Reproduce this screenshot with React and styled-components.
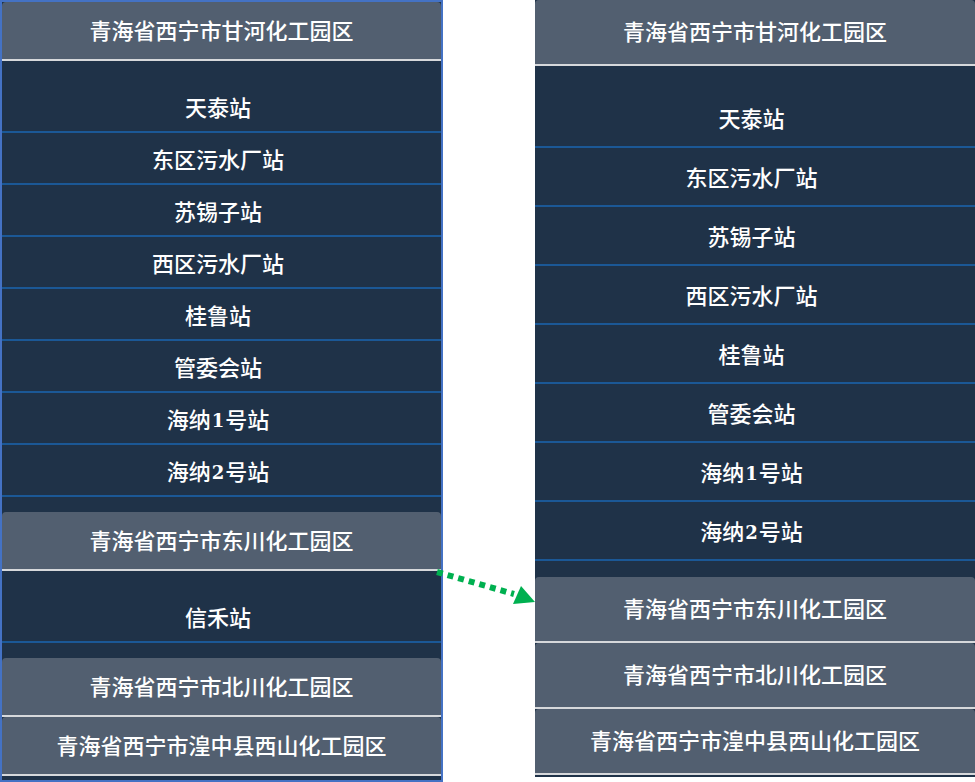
import React from "react";
import styled, { createGlobalStyle } from "styled-components";

const GlobalStyle = createGlobalStyle`
  html, body {
    margin: 0;
    padding: 0;
    background: #ffffff;
  }
  body {
    font-family: "Noto Sans CJK SC", "Noto Sans", sans-serif;
  }
`;

const Page = styled.div`
  position: relative;
  width: 975px;
  height: 782px;
  display: flex;
  align-items: flex-start;
  gap: 92px;
  overflow: hidden;
`;

const Panel = styled.div`
  box-sizing: border-box;
  width: ${(p) => p.$width}px;
  height: ${(p) => p.$height}px;
  background: #1f3248;
  border: ${(p) => (p.$framed ? "2px solid #4472c4" : "none")};
  display: flex;
  flex-direction: column;
  overflow: hidden;
  flex-shrink: 0;
`;

const GroupHeader = styled.div`
  box-sizing: border-box;
  height: ${(p) => p.$h + 2}px;
  padding-bottom: 4px;
  display: flex;
  align-items: center;
  justify-content: center;
  background: #525f70;
  border-bottom: 2px solid #d6d8db;
  border-radius: 4px 4px 0 0;
  color: #ffffff;
  font-size: 22px;
  line-height: 1;
  font-weight: 500;
  flex-shrink: 0;
`;

const StationList = styled.ul`
  list-style: none;
  margin: 0;
  padding: ${(p) => p.$top}px 0 ${(p) => p.$bottom}px;
`;

const Station = styled.li`
  box-sizing: border-box;
  height: ${(p) => p.$h}px;
  padding: 0 7px 1px 0;
  display: flex;
  align-items: center;
  justify-content: center;
  border-bottom: 2px solid #1b5896;
  color: #ffffff;
  font-size: 22px;
  line-height: 1;
  font-weight: 500;
`;

const Digit = styled.span`
  font-family: "DejaVu Serif", "Liberation Serif", serif;
  font-weight: 700;
  font-size: 18px;
  position: relative;
  top: 3px;
  margin: 0 1px;
`;

const Arrow = styled.svg`
  position: absolute;
  left: 430px;
  top: 560px;
  overflow: visible;
`;

const groups = [
  {
    name: "青海省西宁市甘河化工园区",
    stations: [
      "天泰站",
      "东区污水厂站",
      "苏锡子站",
      "西区污水厂站",
      "桂鲁站",
      "管委会站",
      "海纳1号站",
      "海纳2号站",
    ],
  },
  { name: "青海省西宁市东川化工园区", stations: ["信禾站"] },
  { name: "青海省西宁市北川化工园区", stations: [] },
  { name: "青海省西宁市湟中县西山化工园区", stations: [] },
];

const renderName = (text) =>
  text.split(/(\d)/).map((part, i) =>
    /\d/.test(part) ? <Digit key={i}>{part}</Digit> : part
  );

function StationPanel({ sizes, openGroups, framed, width, height }) {
  return (
    <Panel $framed={framed} $width={width} $height={height}>
      {groups.map((g, gi) => (
        <React.Fragment key={g.name}>
          <GroupHeader $h={sizes.header}>{g.name}</GroupHeader>
          {openGroups.includes(gi) && g.stations.length > 0 && (
            <StationList $top={sizes.padTop} $bottom={sizes.padBottom}>
              {g.stations.map((s) => (
                <Station key={s} $h={sizes.row}>
                  {renderName(s)}
                </Station>
              ))}
            </StationList>
          )}
        </React.Fragment>
      ))}
    </Panel>
  );
}

export default function App() {
  return (
    <>
      <GlobalStyle />
      <Page>
        <StationPanel
          framed
          width={443}
          height={782}
          openGroups={[0, 1]}
          sizes={{ header: 57, row: 52, padTop: 20, padBottom: 15 }}
        />
        <StationPanel
          width={440}
          height={777}
          openGroups={[0]}
          sizes={{ header: 64, row: 59, padTop: 23, padBottom: 16 }}
        />
        <Arrow width="110" height="50" viewBox="430 560 110 50">
          <line
            x1="437"
            y1="572"
            x2="514"
            y2="594"
            stroke="#00b050"
            strokeWidth="6"
            strokeDasharray="6 5"
          />
          <polygon points="521,586 535,602 513,604" fill="#00b050" />
        </Arrow>
      </Page>
    </>
  );
}
